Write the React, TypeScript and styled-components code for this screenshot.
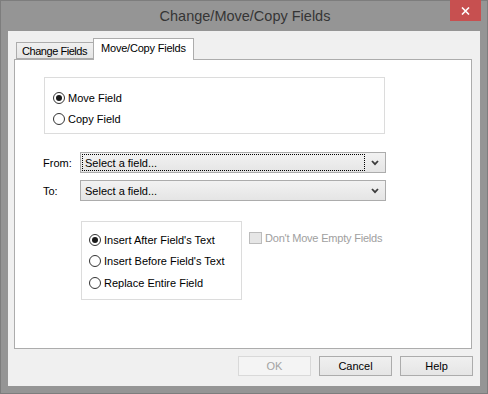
import React, { useState } from 'react';
import styled, { createGlobalStyle } from 'styled-components';

const GlobalStyle = createGlobalStyle`
    html, body {
        margin: 0;
        padding: 0;
    }
    body {
        width: 488px;
        height: 394px;
        overflow: hidden;
        font-family: "Liberation Sans", Arial, sans-serif;
        font-size: 11px;
        color: #000;
    }
    * {
        box-sizing: border-box;
    }
`;

const DialogFrame = styled.div`
    width: 488px;
    height: 394px;
    background: #959595;
    border: 1px solid #7d7d7d;
    padding: 0 7px 7px 7px;
    display: flex;
    flex-direction: column;
`;

const TitleBar = styled.div`
    position: relative;
    height: 30px;
    display: flex;
    align-items: center;
    justify-content: center;
    padding-bottom: 1px;
`;

const TitleText = styled.span`
    font-size: 14.5px;
    color: #353535;
    padding-left: 2px;
`;

const CloseButton = styled.button`
    position: absolute;
    top: -1px;
    right: -1px;
    width: 31px;
    height: 21px;
    border: none;
    padding: 0;
    background: #c75050;
    display: flex;
    align-items: center;
    justify-content: center;
`;

const ClientArea = styled.div`
    flex: 1;
    background: #f0f0f0;
    padding: 7px 8px 0 6px;
    display: flex;
    flex-direction: column;
`;

const TabStrip = styled.div`
    display: flex;
    align-items: flex-end;
    height: 21px;
    padding-left: 2px;
`;

const Tab = styled.div<{ $active?: boolean }>`
    position: relative;
    z-index: ${props => props.$active ? 2 : 1};
    height: ${props => props.$active ? '22px' : '17px'};
    width: ${props => props.$active ? '101px' : '78px'};
    margin-left: ${props => props.$active ? '-1px' : '0'};
    margin-bottom: ${props => props.$active ? '-1px' : '0'};
    border: 1px solid #acacac;
    border-bottom: ${props => props.$active ? 'none' : '1px solid #acacac'};
    background: ${props => props.$active ? '#fff' : 'linear-gradient(#f0f0f0, #e5e5e5)'};
    display: flex;
    align-items: ${props => props.$active ? 'flex-start' : 'center'};
    padding-top: ${props => props.$active ? '3px' : '0'};
    padding-left: ${props => props.$active ? '7px' : '5px'};
    letter-spacing: ${props => props.$active ? '-0.2px' : '-0.45px'};
    font-size: 11px;
    white-space: nowrap;
    overflow: hidden;
`;

const TabPanel = styled.div`
    position: relative;
    z-index: 1;
    height: 290px;
    background: #fff;
    border: 1px solid #acacac;
    display: flex;
    flex-direction: column;
`;

const GroupBox = styled.div<{ $left: number; $top: number; $width: number; $height: number; $padLeft: number; $padTop: number }>`
    margin-left: ${props => props.$left}px;
    margin-top: ${props => props.$top}px;
    width: ${props => props.$width}px;
    height: ${props => props.$height}px;
    border: 1px solid #dcdcdc;
    padding: ${props => props.$padTop}px 0 0 ${props => props.$padLeft}px;
    display: flex;
    flex-direction: column;
    flex-shrink: 0;
`;

const RadioRow = styled.label<{ $height: number }>`
    display: flex;
    align-items: center;
    gap: 3px;
    height: ${props => props.$height}px;
    white-space: nowrap;
    cursor: default;
`;

const RadioCircle = styled.span<{ $checked: boolean }>`
    width: 12px;
    height: 12px;
    border-radius: 50%;
    border: 1px solid #333;
    background: #fff;
    display: flex;
    align-items: center;
    justify-content: center;
    flex-shrink: 0;

    &::after {
        content: '';
        display: ${props => props.$checked ? 'block' : 'none'};
        width: 6px;
        height: 6px;
        border-radius: 50%;
        background: #1a1a1a;
    }
`;

const FieldRow = styled.div<{ $top: number }>`
    display: flex;
    align-items: center;
    margin-top: ${props => props.$top}px;
    padding-left: 28px;
`;

const FieldLabel = styled.span`
    width: 37px;
`;

const SelectBox = styled.div`
    width: 306px;
    height: 21px;
    border: 1px solid #acacac;
    background: linear-gradient(#f2f2f2, #e5e5e5);
    display: flex;
    align-items: center;
    padding: 1px;
`;

const SelectValue = styled.div<{ $focused?: boolean }>`
    flex: 1;
    height: 17px;
    display: flex;
    align-items: center;
    padding-left: 2px;
    border: 1px dotted ${props => props.$focused ? '#000' : 'transparent'};
`;

const SelectArrow = styled.div`
    width: 19px;
    display: flex;
    justify-content: center;
    padding-left: 1px;
`;

const OptionsRow = styled.div`
    display: flex;
    align-items: flex-start;
`;

const CheckRow = styled.div`
    display: flex;
    align-items: center;
    gap: 3px;
    margin-left: 7px;
    margin-top: 31px;
    color: #a0a0a0;
    letter-spacing: -0.2px;
    white-space: nowrap;
`;

const CheckBox = styled.span`
    width: 13px;
    height: 12px;
    border: 1px solid #bcbcbc;
    background: #e6e6e6;
`;

const ButtonBar = styled.div`
    display: flex;
    justify-content: flex-end;
    gap: 8px;
    margin-top: 7px;
    margin-right: -1px;
`;

const DialogButton = styled.button`
    width: 73px;
    height: 20px;
    border: 1px solid #acacac;
    background: linear-gradient(#f0f0f0, #e5e5e5);
    font-family: "Liberation Sans", Arial, sans-serif;
    font-size: 11px;
    color: #000;
    padding: 0;

    &:disabled {
        border-color: #d9d9d9;
        background: #f4f4f4;
        color: #a3a3a3;
    }
`;

const Chevron = () => (
    <svg width="8" height="6" viewBox="0 0 8 6">
        <path d="M1 1 L4 4.2 L7 1" fill="none" stroke="#3c3c3c" strokeWidth="1.8" />
    </svg>
);

const RadioOption: React.FC<RadioOptionProperties> = props => (
    <RadioRow $height={props.height} onClick={props.onSelect}>
        <RadioCircle $checked={props.checked} />
        <span>{props.label}</span>
    </RadioRow>
);

interface RadioOptionProperties {
    label: string;
    checked: boolean;
    height: number;
    onSelect: () => void;
}

const App: React.FC = () => {

    const [operation, setOperation] = useState('move');
    const [placement, setPlacement] = useState('after');

    const placements = [
        { id: 'after', label: "Insert After Field's Text" },
        { id: 'before', label: "Insert Before Field's Text" },
        { id: 'replace', label: 'Replace Entire Field' },
    ];

    return (
        <>
            <GlobalStyle />
            <DialogFrame>
                <TitleBar>
                    <TitleText>Change/Move/Copy Fields</TitleText>
                    <CloseButton>
                        <svg width="9" height="8" viewBox="0 0 9 8">
                            <path d="M1 0.5 L8 7.5 M8 0.5 L1 7.5" stroke="#fff" strokeWidth="1.6" />
                        </svg>
                    </CloseButton>
                </TitleBar>
                <ClientArea>
                    <TabStrip>
                        <Tab>Change Fields</Tab>
                        <Tab $active>Move/Copy Fields</Tab>
                    </TabStrip>
                    <TabPanel>
                        <GroupBox $left={29} $top={17} $width={341} $height={57} $padLeft={8} $padTop={9}>
                            <RadioOption label="Move Field" height={21} checked={operation === 'move'} onSelect={() => setOperation('move')} />
                            <RadioOption label="Copy Field" height={21} checked={operation === 'copy'} onSelect={() => setOperation('copy')} />
                        </GroupBox>
                        <FieldRow $top={18}>
                            <FieldLabel>From:</FieldLabel>
                            <SelectBox>
                                <SelectValue $focused>Select a field...</SelectValue>
                                <SelectArrow><Chevron /></SelectArrow>
                            </SelectBox>
                        </FieldRow>
                        <FieldRow $top={7}>
                            <FieldLabel>To:</FieldLabel>
                            <SelectBox>
                                <SelectValue>Select a field...</SelectValue>
                                <SelectArrow><Chevron /></SelectArrow>
                            </SelectBox>
                        </FieldRow>
                        <OptionsRow>
                            <GroupBox $left={66} $top={20} $width={161} $height={79} $padLeft={7} $padTop={7}>
                                {placements.map(option => (
                                    <RadioOption
                                        key={option.id}
                                        label={option.label}
                                        height={21.5}
                                        checked={placement === option.id}
                                        onSelect={() => setPlacement(option.id)}
                                    />
                                ))}
                            </GroupBox>
                            <CheckRow>
                                <CheckBox />
                                <span>Don't Move Empty Fields</span>
                            </CheckRow>
                        </OptionsRow>
                    </TabPanel>
                    <ButtonBar>
                        <DialogButton disabled>OK</DialogButton>
                        <DialogButton>Cancel</DialogButton>
                        <DialogButton>Help</DialogButton>
                    </ButtonBar>
                </ClientArea>
            </DialogFrame>
        </>
    );
};

export default App;
